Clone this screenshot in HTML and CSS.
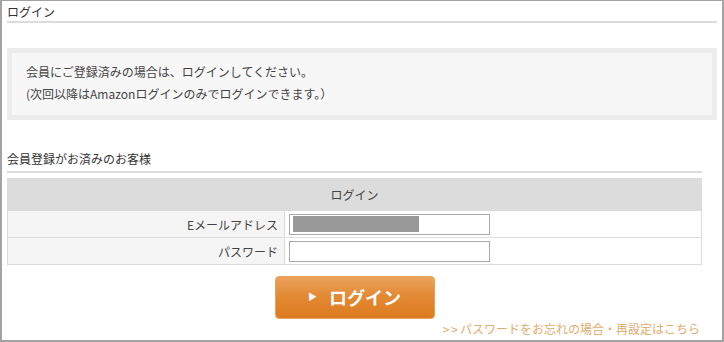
FILE: index.html
```html
<!DOCTYPE html>
<html>
<head>
  <meta charset="utf-8">
  <title>ログイン</title>
  <link rel="stylesheet" href="styles.css">
</head>
<body>
<div class="login-frame">
  <h2 class="login-title">ログイン</h2>

  <div class="login-notice">
    <p>会員にご登録済みの場合は、ログインしてください。</p>
    <p>(次回以降はAmazonログインのみでログインできます。）</p>
  </div>

  <h3 class="login-subtitle">会員登録がお済みのお客様</h3>
  <table class="login-table">
    <tr>
      <th colspan="2" class="login-table-head">ログイン</th>
    </tr>
    <tr>
      <th class="login-label">Eメールアドレス</th>
      <td class="login-value">
        <div class="login-field">
          <input type="text" class="login-input">
          <span class="login-mask"></span>
        </div>
      </td>
    </tr>
    <tr>
      <th class="login-label">パスワード</th>
      <td class="login-value">
        <input type="password" class="login-input">
      </td>
    </tr>
  </table>

  <div class="login-actions">
    <button class="login-btn"><span class="login-btn-arrow">&#9654;</span>ログイン</button>
  </div>
  <div class="login-forgot">
    <a href="#"><span class="login-forgot-arrows">&gt;&gt;</span>パスワードをお忘れの場合・再設定はこちら</a>
  </div>
</div>
</body>
</html>
```

FILE: styles.css
```css
    html, body {
      margin: 0;
      padding: 0;
    }
    body {
      font-family: "Noto Sans CJK JP", "Noto Sans", sans-serif;
      font-size: 12px;
      color: #444;
      background: #fff;
    }
    .login-frame {
      box-sizing: border-box;
      width: 724px;
      height: 342px;
      border: 2px solid #a3a3a3;
      border-top-width: 1px;
      padding: 0 5px;
      overflow: hidden;
    }
    .login-title {
      margin: 0;
      font-size: 12px;
      font-weight: normal;
      line-height: 19px;
      padding-top: 1px;
      color: #333;
      border-bottom: 2px solid #dcdcdc;
    }
    .login-notice {
      margin-top: 25px;
      border: 5px solid #ececec;
      background: #f7f7f7;
      padding: 8px 14px 10px;
    }
    .login-notice p {
      margin: 0;
      line-height: 22px;
    }
    .login-subtitle {
      margin: 28px 15px 0 0;
      font-size: 12px;
      font-weight: normal;
      line-height: 22px;
      padding-bottom: 1px;
      color: #333;
      border-bottom: 2px solid #dcdcdc;
    }
    .login-table {
      margin-top: 5px;
      width: 695px;
      border-collapse: collapse;
    }
    .login-table th,
    .login-table td {
      border: 1px solid #dcdcdc;
      padding: 0;
      font-weight: normal;
    }
    .login-table-head {
      background: #dcdcdc;
      height: 31px;
      text-align: center;
      color: #444;
    }
    .login-label {
      width: 270px;
      background: #f5f5f5;
      text-align: right;
      padding-right: 6px !important;
      height: 26px;
    }
    .login-value {
      background: #fff;
      padding-left: 4px !important;
    }
    .login-field {
      position: relative;
      width: 201px;
      height: 21px;
    }
    .login-input {
      display: block;
      box-sizing: border-box;
      width: 201px;
      height: 21px;
      margin: 0;
      border: 1px solid #aaa;
      background: #fff;
    }
    .login-mask {
      position: absolute;
      left: 4px;
      top: 2px;
      width: 126px;
      height: 16px;
      background: #999;
    }
    .login-actions {
      display: flex;
      justify-content: center;
      width: 695px;
      margin-top: 11px;
    }
    .login-btn {
      box-sizing: border-box;
      width: 160px;
      height: 43px;
      border: 1px solid #e5a262;
      border-radius: 4px;
      background: linear-gradient(to bottom, #eba35c 0%, #e38a34 45%, #dd7b1f 100%);
      color: #fff;
      font-family: "Noto Sans CJK JP", sans-serif;
      font-size: 18px;
      font-weight: bold;
      display: flex;
      align-items: center;
      justify-content: center;
      padding: 0 0 2px 0;
    }
    .login-btn-arrow {
      font-size: 9px;
      margin-right: 12px;
    }
    .login-forgot {
      width: 693px;
      text-align: right;
      margin-top: 1px;
      line-height: 18px;
    }
    .login-forgot a {
      color: #e2ac6c;
      text-decoration: none;
    }
    .login-forgot-arrows {
      letter-spacing: 2px;
    }
```
